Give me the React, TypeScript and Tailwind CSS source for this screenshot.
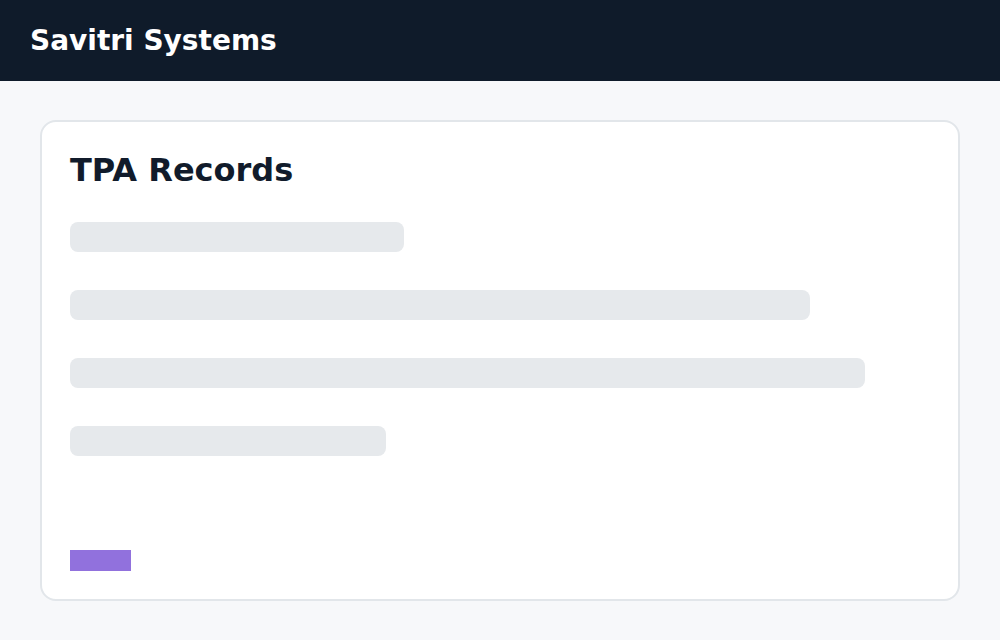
export default function App() {
  const bars = [334, 740, 795, 316];
  return (
    <div className="min-h-screen bg-[#f7f8fa]" style={{ fontFamily: '"DejaVu Sans", sans-serif' }}>
      <header className="h-[81px] bg-[#0f1b2a] flex items-center px-[30px]">
        <h1 className="text-white text-[28px] font-bold pt-[1px]">Savitri Systems</h1>
      </header>
      <main className="px-10 pt-[39px] pb-10">
        <div className="h-[481px] bg-white border-2 border-[#e2e6ea] rounded-2xl px-7 pt-[26px] pb-7 flex flex-col">
          <h2 className="text-[32px] font-bold text-[#111b2b] leading-[44px]">TPA Records</h2>
          <div className="mt-[30px] flex flex-col gap-[38px]">
            {bars.map((w, i) => (
              <div key={i} className="h-[30px] rounded-lg bg-[#e6e9ec]" style={{ width: w }} />
            ))}
          </div>
          <div className="mt-auto w-[61px] h-[21px] bg-[#9171dd]" />
        </div>
      </main>
    </div>
  );
}
